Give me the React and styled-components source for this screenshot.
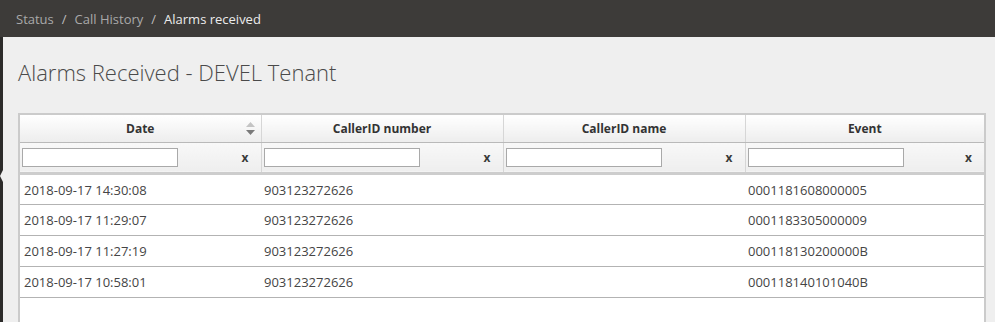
import React from "react";
import styled, { createGlobalStyle } from "styled-components";

const GlobalStyle = createGlobalStyle`
  html, body {
    margin: 0;
    padding: 0;
    background: #efefef;
    font-family: "Open Sans", "Liberation Sans", sans-serif;
  }
  * { box-sizing: border-box; }
`;

const Page = styled.div`
  display: flex;
  flex-direction: column;
  min-height: 100vh;
`;

const TopBar = styled.div`
  height: 37px;
  background: #3d3b39;
  display: flex;
  align-items: center;
  padding-left: 16px;
  font-size: 13px;
  color: #a9a9a9;
`;

const Crumb = styled.span`
  color: ${(p) => (p.current ? "#ececec" : "#a9a9a9")};
`;

const Sep = styled.span`
  margin: 0 8px;
  color: #bdbdbd;
`;

const Body = styled.div`
  flex: 1;
  display: flex;
`;

const SideEdge = styled.div`
  width: 3px;
  background: #2c2b2a;
  position: relative;

  &::after {
    content: "";
    position: absolute;
    top: 133px;
    left: 0;
    border-top: 6px solid transparent;
    border-bottom: 6px solid transparent;
    border-right: 3px solid #efefef;
  }
`;

const Main = styled.div`
  flex: 1;
  display: flex;
  flex-direction: column;
  padding: 20px 9px 0 15px;
`;

const Title = styled.h1`
  margin: 0 0 26px;
  font-size: 22px;
  font-weight: 300;
  color: #4a4a4a;
  line-height: 30px;
`;

const TableBox = styled.div`
  flex: 1;
  background: #fff;
  border: 2px solid #cbcbcb;
  border-bottom: none;
`;

const Table = styled.table`
  width: 100%;
  border-collapse: collapse;
  table-layout: fixed;
`;

const Col = styled.col`
  width: ${(p) => p.w || "auto"};
`;

const HeadCell = styled.th`
  position: relative;
  height: 27px;
  padding: 0;
  font-size: 12px;
  font-weight: 700;
  color: #333;
  text-align: center;
  background: linear-gradient(#ffffff, #ededed);
  border-bottom: 1px solid #b9b9b9;
  border-left: ${(p) => (p.first ? "none" : "1px solid #d6d6d6")};
`;

const SortIcon = styled.svg`
  position: absolute;
  right: 6px;
  top: 7px;
`;

const FilterCell = styled.td`
  height: 31px;
  padding: 0 3px 0 2px;
  background: linear-gradient(#f8f8f8, #eeeeee);
  border-bottom: 3px solid #cdcdcd;
  border-left: ${(p) => (p.first ? "none" : "1px solid #d6d6d6")};
`;

const FilterRow = styled.div`
  display: flex;
  align-items: center;
  justify-content: space-between;
  padding-top: 1px;
`;

const FilterInput = styled.input`
  width: 156px;
  height: 19px;
  border: 1px solid #a9a9a9;
  background: #fff;
  padding: 0 3px;
  margin: 0;
  outline: none;
`;

const Clear = styled.span`
  font-size: 12px;
  font-weight: 700;
  color: #3a3a3a;
  margin-right: 9px;
`;

const Cell = styled.td`
  height: 31px;
  padding: 1px 3px 0 ${(p) => (p.first ? "4px" : "3px")};
  font-size: 13px;
  color: #454545;
  border-bottom: 1px solid #b3b3b3;
  white-space: nowrap;
`;

const columns = ["Date", "CallerID number", "CallerID name", "Event"];

const alarms = [
  { date: "2018-09-17 14:30:08", number: "903123272626", name: "", event: "0001181608000005" },
  { date: "2018-09-17 11:29:07", number: "903123272626", name: "", event: "0001183305000009" },
  { date: "2018-09-17 11:27:19", number: "903123272626", name: "", event: "000118130200000B" },
  { date: "2018-09-17 10:58:01", number: "903123272626", name: "", event: "000118140101040B" },
];

const App = () => {
  return (
    <Page>
      <GlobalStyle />
      <TopBar>
        <Crumb>Status</Crumb>
        <Sep>/</Sep>
        <Crumb>Call History</Crumb>
        <Sep>/</Sep>
        <Crumb current>Alarms received</Crumb>
      </TopBar>
      <Body>
        <SideEdge />
        <Main>
          <Title>Alarms Received - DEVEL Tenant</Title>
          <TableBox>
            <Table>
              <colgroup>
                <Col w="241px" />
                <Col w="242px" />
                <Col w="242px" />
                <Col />
              </colgroup>
              <thead>
                <tr>
                  {columns.map((col, i) => (
                    <HeadCell key={col} first={i === 0}>
                      {col}
                      {i === 0 && (
                        <SortIcon width="9" height="13" viewBox="0 0 9 13">
                          <polygon points="4.5,0 9,5 0,5" fill="#c4c4c4" />
                          <polygon points="0,8 9,8 4.5,13" fill="#7a7a7a" />
                        </SortIcon>
                      )}
                    </HeadCell>
                  ))}
                </tr>
                <tr>
                  {columns.map((col, i) => (
                    <FilterCell key={col} first={i === 0}>
                      <FilterRow>
                        <FilterInput type="text" />
                        <Clear>x</Clear>
                      </FilterRow>
                    </FilterCell>
                  ))}
                </tr>
              </thead>
              <tbody>
                {alarms.map((a) => (
                  <tr key={a.date}>
                    <Cell first>{a.date}</Cell>
                    <Cell>{a.number}</Cell>
                    <Cell>{a.name}</Cell>
                    <Cell>{a.event}</Cell>
                  </tr>
                ))}
              </tbody>
            </Table>
          </TableBox>
        </Main>
      </Body>
    </Page>
  );
};

export default App;
